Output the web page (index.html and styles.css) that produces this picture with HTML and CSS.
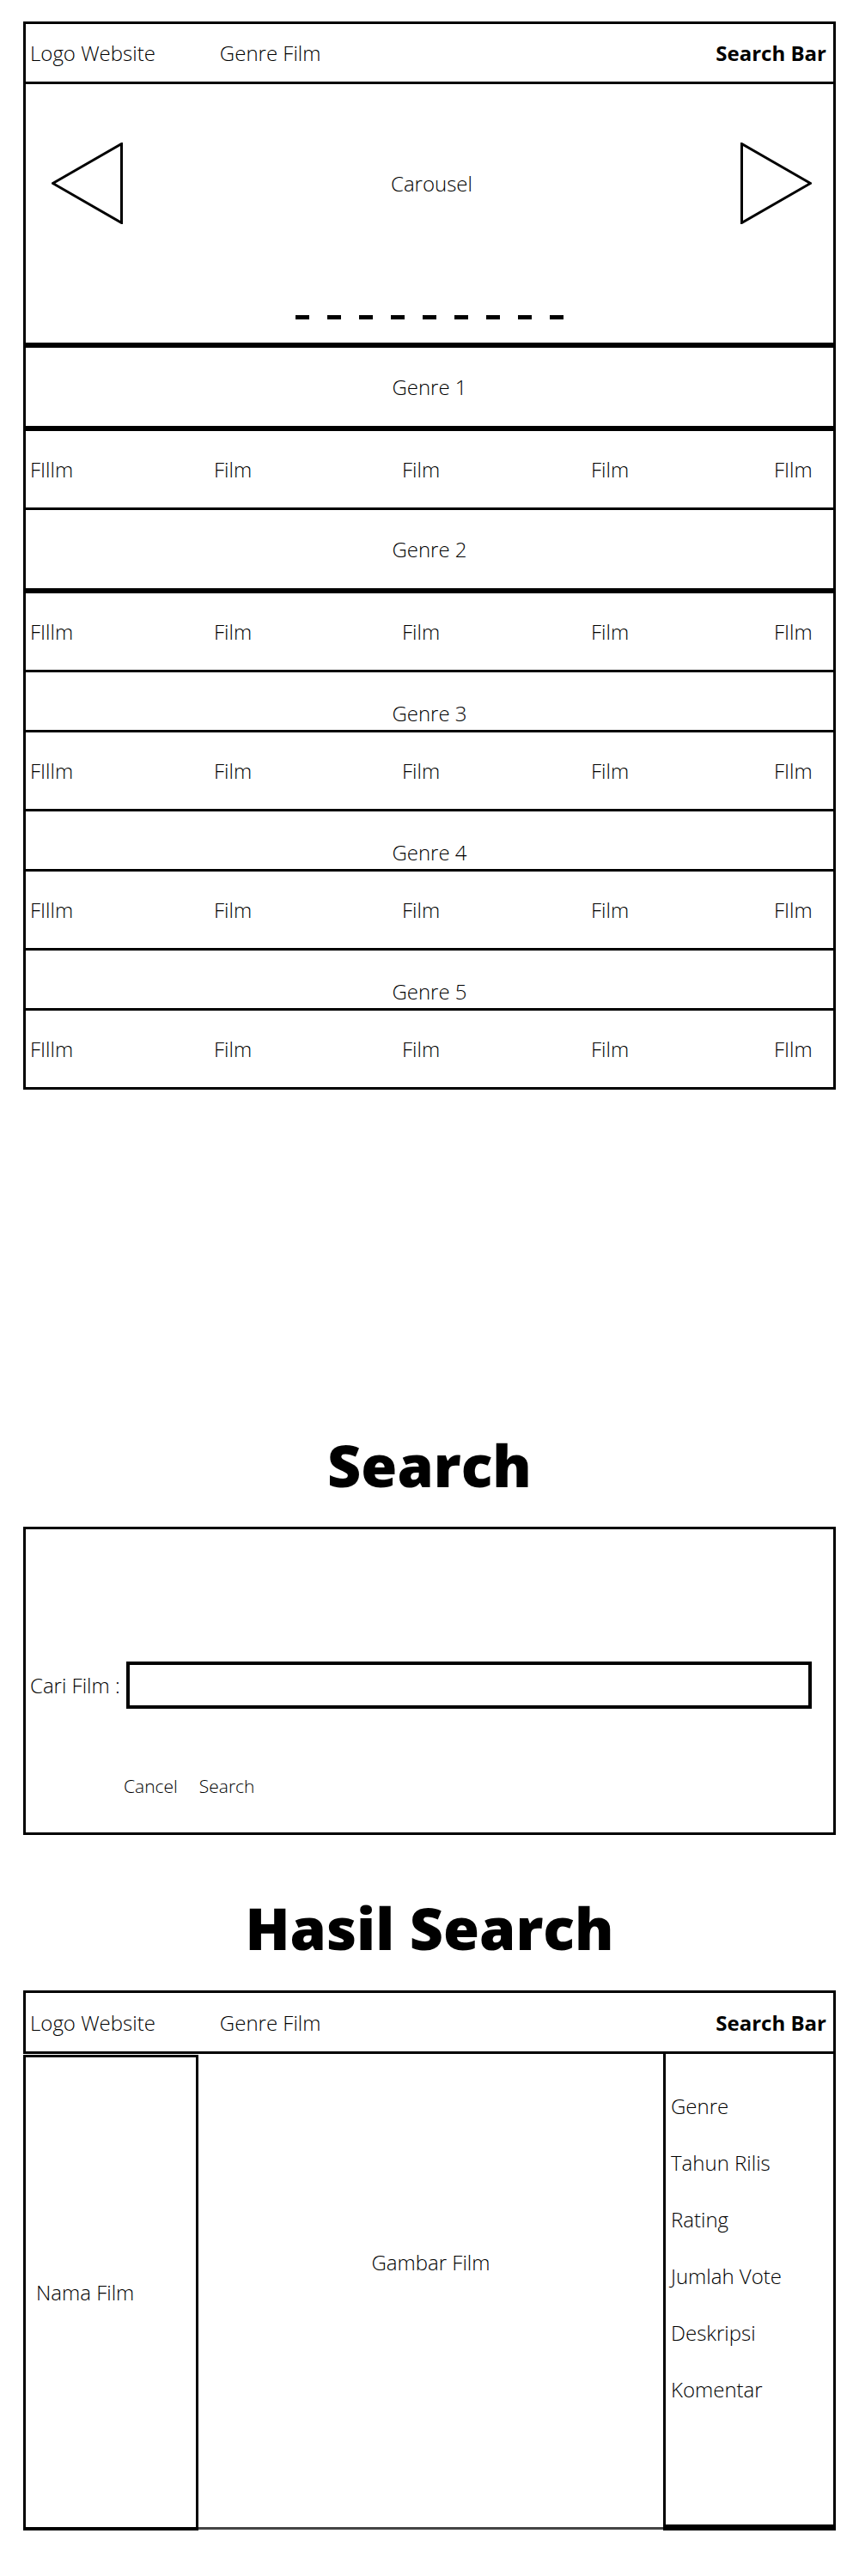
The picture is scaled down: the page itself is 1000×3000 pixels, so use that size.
FILE: index.html
```html
<!DOCTYPE html>
<html lang="id">
<head>
  <meta charset="UTF-8">
  <meta name="viewport" content="width=device-width, initial-scale=1.0">
  <title>Wireframe Website Film</title>
  <link rel="stylesheet" href="styles.css">
</head>
<body>
  <div class="page">
    <!-- Halaman utama -->
    <div class="wire">
      <div class="topbar">
        <span class="logo">Logo Website</span>
        <span class="genre-link">Genre Film</span>
        <span class="search-link">Search Bar</span>
      </div>

      <div class="carousel">
        <div class="carousel-row">
          <svg class="arrow" width="83" height="95" viewBox="0 0 83 95">
            <polygon points="1.5,47.5 81.5,1.5 81.5,93.5" fill="none" stroke="#000" stroke-width="3"/>
          </svg>
          <span>Carousel</span>
          <svg class="arrow" width="83" height="95" viewBox="0 0 83 95">
            <polygon points="81.5,47.5 1.5,1.5 1.5,93.5" fill="none" stroke="#000" stroke-width="3"/>
          </svg>
        </div>
        <div class="dots">
          <span></span><span></span><span></span><span></span><span></span><span></span><span></span><span></span><span></span>
        </div>
      </div>

      <div class="genre tall gap">Genre 1</div>
      <div class="films gap">
        <span>FIllm</span><span>Film</span><span>Film</span><span>Film</span><span>FIlm</span>
      </div>

      <div class="genre tall">Genre 2</div>
      <div class="films gap">
        <span>FIllm</span><span>Film</span><span>Film</span><span>Film</span><span>FIlm</span>
      </div>

      <div class="genre short">Genre 3</div>
      <div class="films">
        <span>FIllm</span><span>Film</span><span>Film</span><span>Film</span><span>FIlm</span>
      </div>

      <div class="genre short">Genre 4</div>
      <div class="films">
        <span>FIllm</span><span>Film</span><span>Film</span><span>Film</span><span>FIlm</span>
      </div>

      <div class="genre short">Genre 5</div>
      <div class="films">
        <span>FIllm</span><span>Film</span><span>Film</span><span>Film</span><span>FIlm</span>
      </div>
    </div>

    <!-- Halaman search -->
    <h2 class="title search-title">Search</h2>
    <div class="search-box">
      <div class="search-row">
        <label for="cari">Cari Film :</label>
        <input type="text" id="cari">
      </div>
      <div class="actions">
        <span>Cancel</span>
        <span>Search</span>
      </div>
    </div>

    <!-- Hasil search -->
    <h2 class="title result-title">Hasil Search</h2>
    <div class="result">
      <div class="topbar">
        <span class="logo">Logo Website</span>
        <span class="genre-link">Genre Film</span>
        <span class="search-link">Search Bar</span>
      </div>
      <div class="result-body">
        <div class="name-col">Nama Film</div>
        <div class="image-col">Gambar Film</div>
        <div class="info-col">
          <span>Genre</span>
          <span>Tahun Rilis</span>
          <span>Rating</span>
          <span>Jumlah Vote</span>
          <span>Deskripsi</span>
          <span>Komentar</span>
        </div>
      </div>
    </div>
  </div>
</body>
</html>
```

FILE: styles.css
```css
body {
  margin: 0;
  background-color: #fff;
  color: #000;
  font-family: "Open Sans", "Liberation Sans", sans-serif;
  font-weight: 300;
  font-size: 24px;
  line-height: 33px;
}

.page {
  padding: 25px 27px;
}

/* every wireframe box shares the same thick outline */
.topbar, .carousel, .genre, .films, .search-box {
  box-sizing: border-box;
  border: 3px solid #000;
}

.wire > div {
  margin-top: -3px;  /* borders overlap into one line */
}

.wire > div:first-child,
.wire > .gap {
  margin-top: 0;     /* two borders side by side, looks doubled */
}

.topbar {
  display: flex;
  align-items: center;
  height: 73px;
  padding: 0 8px 0 5px;
}

.genre-link {
  margin-left: 75px;
}

.search-link {
  margin-left: auto;
  font-weight: 700;
}

.carousel {
  height: 307px;
  padding-top: 68px;
}

.carousel-row {
  display: flex;
  justify-content: space-between;
  align-items: center;
  padding: 0 25px 0 30px;
}

.arrow {
  display: block;
}

.dots {
  display: flex;
  justify-content: center;
  gap: 21px;
  margin-top: 106px;
}

.dots span {
  width: 16px;
  height: 5px;
  background-color: #000;
}

.genre {
  text-align: center;
}

.genre.tall {
  height: 97px;
  padding-top: 29px;
}

.genre.short {
  height: 73px;
  padding-top: 31px;
}

.films {
  display: grid;
  grid-template-columns: 214px 219px 220px 213px auto;
  align-items: center;
  height: 95px;
  padding-left: 5px;
}

.title {
  margin: 0;
  text-align: center;
  font-size: 68px;
  font-weight: 800;
  line-height: 68px;
}

.search-title {
  margin-top: 403px;
}

.search-box {
  margin-top: 38px;
  height: 359px;
  padding-top: 154px;
}

.search-row {
  display: flex;
  align-items: center;
  gap: 7px;
  padding: 0 25px 0 5px;
}

.search-row input {
  flex: 1;
  box-sizing: border-box;
  height: 55px;
  border: 4px solid #000;
  border-radius: 0;
  margin: 0;
}

.actions {
  display: flex;
  gap: 25px;
  margin-top: 76px;
  padding-left: 114px;
  font-size: 21px;
  line-height: 29px;
}

.result-title {
  margin-top: 74px;
}

.result {
  margin-top: 39px;
}

.result .topbar {
  height: 74px;
}

.result-body {
  display: flex;
  align-items: flex-start;
}

.name-col {
  box-sizing: border-box;
  width: 204px;
  height: 554px;
  margin-top: 1px;
  border: 3px solid #000;
  border-bottom-width: 4px;
  padding-left: 12px;
  display: flex;
  align-items: center;
}

.image-col {
  flex: 1;
  box-sizing: border-box;
  height: 554px;
  border-bottom: 3px solid #444;
  padding-top: 226px;
  text-align: center;
}

.info-col {
  box-sizing: border-box;
  width: 201px;
  height: 558px;
  margin-top: -3px;
  border: 3px solid #000;
  border-bottom-width: 7px;
  padding: 44px 0 0 6px;
  display: flex;
  flex-direction: column;
  gap: 33px;
}
```
